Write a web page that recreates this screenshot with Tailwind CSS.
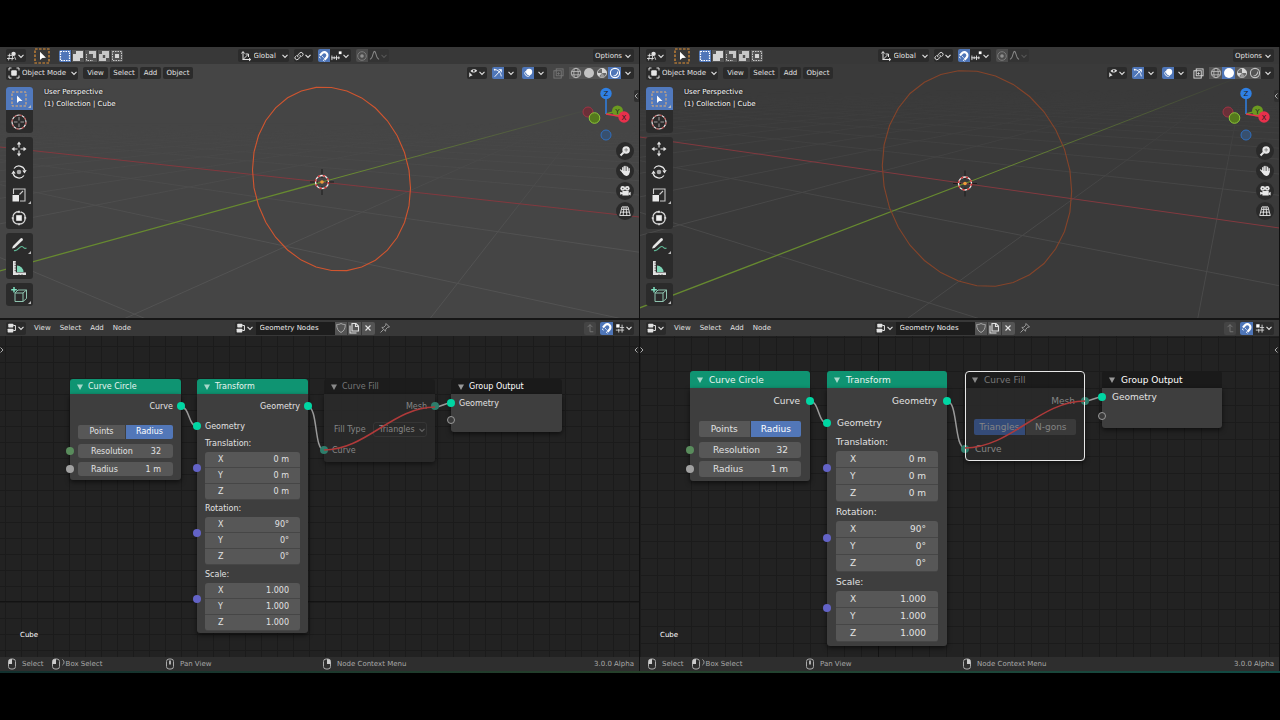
<!DOCTYPE html>
<html lang="en">
<head>
    <meta charset="UTF-8">
    <meta name="viewport" content="width=device-width, initial-scale=1.0">
    <script src="https://cdn.jsdelivr.net/npm/@tailwindcss/browser@4"></script>
    <title>Geometry Nodes - Curve Fill</title>
</head>
<body class="bg-black font-['DejaVu_Sans',sans-serif] text-[7px] leading-3 text-[#e2e2e2]">

    <!-- Icon set -->
    <svg class="hidden">
        <symbol id="i-chev" viewBox="0 0 8 8"><path d="M1.5 2.8 4 5.4 6.5 2.8" fill="none" stroke="currentColor" stroke-width="1.1"/></symbol>
        <symbol id="i-view3d" viewBox="0 0 16 16"><path d="M1 7h8M0 12h11M4.500 4 2.500 15M9 8l-1 7M12 9l2 5" fill="none" stroke="currentColor" stroke-width="1.400"/><circle cx="10.500" cy="4.500" r="3.500" fill="currentColor"/></symbol>
        <symbol id="i-nodes" viewBox="0 0 16 16"><rect x="2" y="1" width="8" height="6" rx="1" fill="currentColor"/><rect x="1" y="9" width="9" height="6" rx="1" fill="currentColor"/><path d="M10 4h3.500v8H10" fill="none" stroke="currentColor" stroke-width="1.600"/></symbol>
        <symbol id="i-selbox" viewBox="0 0 16 16"><rect x="1" y="1" width="14" height="14" fill="none" stroke="#e29136" stroke-width="1.200" stroke-dasharray="2.600 1.400"/><path d="M6 3.800v8.200l2.300-2 3.700-.2z" fill="#fff"/></symbol>
        <symbol id="i-m1" viewBox="0 0 12 12"><rect x="1.500" y="1.500" width="9" height="9" fill="none" stroke="#fff" stroke-width="1.200" stroke-dasharray="1.500 1"/></symbol>
        <symbol id="i-m2" viewBox="0 0 12 12"><path d="M4 1h7v7H8v3H1V4h3z" fill="#d4d4d4"/></symbol>
        <symbol id="i-m3" viewBox="0 0 12 12"><path d="M4 1h7v7H8V4H4z" fill="#c8c8c8"/><path d="M1.500 4v6.500H8" fill="none" stroke="#c8c8c8" stroke-dasharray="1.500 1"/></symbol>
        <symbol id="i-m4" viewBox="0 0 12 12"><path d="M4 1h7v7H8v3H1V4h3zM4.800 5v3H7.200V5z" fill="#c8c8c8" fill-rule="evenodd"/></symbol>
        <symbol id="i-m5" viewBox="0 0 12 12"><rect x="1.500" y="1.500" width="9" height="9" fill="none" stroke="#c8c8c8" stroke-dasharray="1.500 1"/><rect x="4" y="4" width="4" height="4" fill="#d4d4d4"/></symbol>
        <symbol id="i-axes" viewBox="0 0 12 12"><path d="M3 10V2M1.500 3.500 3 1.500l1.500 2M3 9.500h7.500M9 8l1.800 1.500L9 11M3 9.500 8 4.500M5.500 4h3v3" fill="none" stroke="currentColor"/></symbol>
        <symbol id="i-link" viewBox="0 0 12 12"><path d="M5 7.500a2.300 2.300 0 0 1 0-3.200L7 2.400a2.200 2.200 0 0 1 3.200 3.200L9 6.800M7 4.700a2.300 2.300 0 0 1 0 3.200L5 9.800a2.200 2.200 0 0 1-3.200-3.200L3 5.400" fill="none" stroke="currentColor" stroke-width="1.200"/></symbol>
        <symbol id="i-magnet" viewBox="0 0 12 12"><path d="M2 5.500 4 3.200a3.100 3.100 0 0 1 4.600 4.200L6.500 9.800" fill="none" stroke="#fff" stroke-width="2.200"/><path d="M1 6.800 2.600 8.200M5 9.800l1.500 1.400M4.200 6.300 5.500 7.500" stroke="#fff" stroke-width="1"/></symbol>
        <symbol id="i-incr" viewBox="0 0 12 12"><path d="M.5 8.500h9M1 6v5M3.500 7v3M6 6v5M8.500 7v3" fill="none" stroke="currentColor"/><rect x="8.500" y="1.500" width="3" height="3" fill="#fff"/></symbol>
        <symbol id="i-grid" viewBox="0 0 12 12"><path d="M1 8.500h10M6 5.500h5M4.500 7v4.500M8.500 2v9.500" fill="none" stroke="currentColor"/><rect x="1.500" y="1.500" width="4" height="4" fill="#fff"/></symbol>
        <symbol id="i-prop" viewBox="0 0 12 12"><circle cx="6" cy="6" r="4.300" fill="none" stroke="#7c7c7c"/><circle cx="6" cy="6" r="1.800" fill="#909090"/></symbol>
        <symbol id="i-falloff" viewBox="0 0 12 12"><path d="M1 10c3.500 0 3-8.500 5-8.500S7.500 10 11 10" fill="none" stroke="#888" stroke-width="1.100"/></symbol>
        <symbol id="i-mode" viewBox="0 0 12 12"><path d="M1 3.500V1h2.500M8.500 1H11v2.500M11 8.500V11H8.500M3.500 11H1V8.500" fill="none" stroke="currentColor"/><rect x="3.200" y="3.200" width="5.600" height="5.600" rx="1" fill="#e6e6e6"/></symbol>
        <symbol id="i-vis" viewBox="0 0 12 12"><path d="M3 3.500C5 .8 9 .8 11 3.200 9 6 5 6 3 3.500z" fill="#e0e0e0"/><circle cx="7" cy="3.300" r="1.100" fill="#2b2b2b"/><path d="M1.500 5v6l1.700-1.500L5.500 9z" fill="#e0e0e0"/></symbol>
        <symbol id="i-gizmo" viewBox="0 0 12 12"><path d="M2 2c4 0 7 3 8 8M2 10.500 10 2M6.800 2H10v3.200" fill="none" stroke="#fff" stroke-width="1.100"/><circle cx="2" cy="2" r="1" fill="#fff"/></symbol>
        <symbol id="i-overlay" viewBox="0 0 12 12"><circle cx="7.300" cy="4.700" r="3.700" fill="#fff"/><path d="M3.200 3.800a3.600 3.600 0 1 0 5.300 5" fill="none" stroke="#fff" stroke-width="1.100"/></symbol>
        <symbol id="i-xray" viewBox="0 0 12 12"><rect x="1" y="3" width="8" height="8" fill="none" stroke="currentColor"/><rect x="3.500" y="1" width="7.500" height="7.500" fill="none" stroke="currentColor"/><path d="M6 4.500v3M4.500 6h3" stroke="currentColor" stroke-width=".8"/></symbol>
        <symbol id="i-wire" viewBox="0 0 12 12"><circle cx="6" cy="6" r="4.700" fill="none" stroke="#bcbcbc" stroke-width=".9"/><ellipse cx="6" cy="6" rx="2.200" ry="4.700" fill="none" stroke="#bcbcbc" stroke-width=".8"/><path d="M1.600 4.500h8.800M1.600 7.800h8.800" stroke="#bcbcbc" stroke-width=".8"/></symbol>
        <symbol id="i-solid" viewBox="0 0 12 12"><circle cx="6" cy="6" r="5" fill="currentColor"/></symbol>
        <symbol id="i-mat" viewBox="0 0 12 12"><circle cx="6" cy="6" r="4.600" fill="#6a6a6a" stroke="#c4c4c4"/><path d="M6 1.300a4.700 4.700 0 0 1 4.700 4.700H6zM6 6 3 9.500A4.700 4.700 0 0 1 1.300 6z" fill="#d8d8d8"/><path d="M6 6l3 3.600A4.700 4.700 0 0 1 4 10.300z" fill="#9a9a9a"/></symbol>
        <symbol id="i-rend" viewBox="0 0 12 12"><circle cx="6" cy="6" r="4.600" fill="none" stroke="currentColor" stroke-width="1.100"/><path d="M8.500 3.500a3.600 3.600 0 0 1-4.600 5.200c2.500 0 4.600-2 4.600-5.200z" fill="currentColor"/></symbol>
        <symbol id="i-shield" viewBox="0 0 12 12"><path d="M6 1.500c1.500.9 2.800 1 4.300 1 0 4-1.300 6.500-4.300 8-3-1.500-4.300-4-4.300-8 1.500 0 2.800-.1 4.300-1z" fill="none" stroke="#a8a8a8"/></symbol>
        <symbol id="i-copy" viewBox="0 0 12 12"><path d="M4 1.500h4L10.500 4v5H4zM7.500 1.500V4.500h3" fill="none" stroke="#e0e0e0" stroke-width="1.100"/><path d="M2 3.500v7.500h6.500" fill="none" stroke="#e0e0e0" stroke-width="1.100"/></symbol>
        <symbol id="i-x" viewBox="0 0 12 12"><path d="M3 3l6 6M9 3 3 9" stroke="#e6e6e6" stroke-width="1.300"/></symbol>
        <symbol id="i-pin" viewBox="0 0 12 12"><path d="M7 1.500 10.500 5 8.800 5.200 6.800 7.200 6.500 9.200 2.800 5.500 4.800 5.200 6.800 3.200zM4.500 7.500 1.500 10.500" fill="none" stroke="#9a9a9a"/></symbol>
        <symbol id="i-up" viewBox="0 0 12 12"><path d="M10 10.500H6V2M3 5l3-3 3 3" fill="none" stroke="#777" stroke-width="1.100"/></symbol>

        <!-- Toolbar -->
        <symbol id="t-select" viewBox="0 0 16 16"><rect x="1" y="1" width="14" height="14" fill="none" stroke="#e8b070" stroke-width="1" stroke-dasharray="2.500 1.500"/><path d="M6 4.500v7.500l2.200-1.900 3.300-.2z" fill="#fff"/></symbol>
        <symbol id="t-cursor" viewBox="0 0 16 16"><circle cx="8" cy="8" r="7" fill="none" stroke="#e8e8e8" stroke-width="1.200"/><circle cx="8" cy="8" r="7" fill="none" stroke="#a04040" stroke-width="1.200" stroke-dasharray="2.750 2.750"/><path d="M8 3v3.500M8 9.500V13M3 8h3.500M9.500 8H13" stroke="#bbb" stroke-width=".8"/></symbol>
        <symbol id="t-move" viewBox="0 0 16 16"><path d="M8 .5l2.200 3H5.800zM8 15.500l2.200-3H5.800zM.5 8l3-2.200v4.400zM15.500 8l-3-2.200v4.400z" fill="#e6e6e6"/><path d="M8 3v3.500M8 9.500V13M3 8h3.500M9.500 8H13" stroke="#e6e6e6" stroke-width="1.100"/></symbol>
        <symbol id="t-rotate" viewBox="0 0 16 16"><path d="M3 4.500a6.200 6.200 0 0 1 10.800 1.500M13 11.500A6.200 6.200 0 0 1 2.200 10" fill="none" stroke="#e6e6e6" stroke-width="1.200"/><path d="M15.700 6 13.500 9.500 11.300 6.500zM.3 10 2.500 6.500 4.700 9.500z" fill="#e6e6e6"/><circle cx="8" cy="8" r="2.300" fill="#aaa"/></symbol>
        <symbol id="t-scale" viewBox="0 0 16 16"><path d="M2.500 7V2h11.500v12H9" fill="none" stroke="#ccc" stroke-width="1.100"/><rect x="1.500" y="8" width="6.500" height="6.500" fill="#e8e8e8"/><path d="M8.500 7.500l3.500-3.500" stroke="#ccc" stroke-width="1.100"/></symbol>
        <symbol id="t-transform" viewBox="0 0 16 16"><circle cx="8" cy="8" r="6.300" fill="none" stroke="#d8d8d8" stroke-width="1.200" stroke-dasharray="8 1.900" stroke-dashoffset="-1"/><rect x="5.200" y="5.200" width="5.600" height="5.600" fill="#f0f0f0"/><path d="M8 .3l1.800 2.400H6.200zM8 15.700l1.800-2.400H6.200zM.3 8l2.400-1.800v3.600zM15.700 8l-2.400-1.800v3.600z" fill="#e6e6e6"/></symbol>
        <symbol id="t-annotate" viewBox="0 0 16 16"><path d="M1 11.500 2 9 9.500 1.500a1.200 1.200 0 0 1 2 2L3.500 11z" fill="#e6e6e6"/><path d="M3 13.500c4 1.500 5-4.500 8-4 2 .3 2 3 4.500 1.500" fill="none" stroke="#5fb896" stroke-width="1.200"/></symbol>
        <symbol id="t-measure" viewBox="0 0 16 16"><path d="M2 1h2.800v11.500H15V15H2z" fill="#e0e0e0"/><path d="M6 12V5.500A6.500 6.500 0 0 1 12.500 12z" fill="#7fd6b8"/><path d="M3.500 3H5M3.500 5.500H5M3.500 8H5M3.500 10.500H5M8 14v1M11 14v1" stroke="#444" stroke-width=".7"/></symbol>
        <symbol id="t-cube" viewBox="0 0 16 16"><path d="M4 6h8v8.500H4zM4 6l3-3h8.500L12 6M15.500 3v8.500L12 14.500" fill="none" stroke="#8fc4b0" stroke-width="1"/><path d="M3 0v5.500M.2 2.800h5.600" stroke="#7fe0c0" stroke-width="1.500"/></symbol>

        <!-- Navigation -->
        <symbol id="n-zoom" viewBox="0 0 16 16"><circle cx="9.500" cy="6.500" r="5" fill="#e8e8e8"/><path d="M6 10l-4 4" stroke="#e8e8e8" stroke-width="2.500"/><path d="M9.500 4v5M7 6.500h5" stroke="#777" stroke-width="1"/></symbol>
        <symbol id="n-hand" viewBox="0 0 16 16"><path d="M2 6.500 5 9.500V3.500M7 8V2M9.200 8V1.800M11.500 8.500V3M13.600 9V5" fill="none" stroke="#e8e8e8" stroke-width="1.700" stroke-linecap="round"/><path d="M4 8h10.400c0 3.500-1.400 6.500-4.400 6.500S5.500 12 3.500 9z" fill="#e8e8e8"/></symbol>
        <symbol id="n-cam" viewBox="0 0 16 16"><circle cx="5" cy="4.500" r="3.200" fill="#e8e8e8"/><circle cx="11" cy="4.500" r="3.200" fill="#e8e8e8"/><path d="M4.500 8H13v6H4.500v-2L1.500 13V9L4.500 10z" fill="#e8e8e8"/><circle cx="5" cy="4.500" r="1" fill="#555"/><circle cx="11" cy="4.500" r="1" fill="#555"/><path d="M13 10.500l2.500-1.500v5L13 12.500z" fill="#e8e8e8"/></symbol>
        <symbol id="n-persp" viewBox="0 0 16 16"><path d="M4 2.500h8L15 14H1zM2.300 9.500h11.400M3.300 5.800h9.400M6.700 2.500 5.500 14M9.300 2.500 10.500 14" fill="none" stroke="#e8e8e8" stroke-width="1.200"/></symbol>

        <!-- Mouse hints -->
        <symbol id="m-left" viewBox="0 0 12 12"><rect x="2.500" y="1" width="7" height="10" rx="2.500" fill="none" stroke="#aaa"/><path d="M2.500 6V3.500C2.500 2 3.500 1 6 1v5z" fill="#ccc"/></symbol>
        <symbol id="m-mid" viewBox="0 0 12 12"><rect x="2.500" y="1" width="7" height="10" rx="2.500" fill="none" stroke="#aaa"/><path d="M6 2.500v4" stroke="#ddd" stroke-width="1.500"/></symbol>
        <symbol id="m-right" viewBox="0 0 12 12"><rect x="2.500" y="1" width="7" height="10" rx="2.500" fill="none" stroke="#aaa"/><path d="M9.500 6V3.500C9.500 2 8.500 1 6 1v5z" fill="#ccc"/></symbol>
        <symbol id="m-drag" viewBox="0 0 4 12"><path d="M.5 1.500c2 1.500 2 4 0 5.500" fill="none" stroke="#aaa"/></symbol>
    </svg>

    <div class="flex min-h-screen flex-col pt-[47px] pb-[47px]">
        <main id="windows" class="grid flex-1 grid-cols-2"></main>
        <div class="h-[2px] bg-linear-to-r from-[#12302e] via-[#26402a] to-[#0f4a44]"></div>
    </div>

    <script>
        const icon = (id, cls = 'size-3') => `<svg class="${cls} shrink-0"><use href="#${id}"/></svg>`;
        const chev = icon('i-chev', 'size-2');

        // Class sets for the two zoom levels of the node editor
        const zoom = {
            small: {
                text: 'text-[8px]', node: 'w-[111px]', head: 'h-[15px] gap-[5px] pl-[7px]', row: 'h-4 pt-px', px: 'px-2',
                seg: 'h-[14px]', num: 'h-[14px] pl-[13px] pr-3 pt-px', vec: 'h-4 pl-[13px] pr-[11px] pt-px',
                label: 'h-[17px] pt-px', io: 'px-2', nums: 'gap-1', side: '-left-3', numTop: 'top-[3px]', vecTop: 'top-[12px]',
                grid: 'bg-size-[16px_16px] bg-position-[5px_10px]'
            },
            large: {
                text: 'text-[9px]', node: 'w-[120px]', head: 'h-[17px] gap-1.5 pl-[7px]', row: 'h-[18px]', px: 'px-[9px]',
                seg: 'h-4', num: 'h-4 pl-[14px] pr-[13px]', vec: 'h-[17px] pl-[14px] pr-3',
                label: 'h-[19px]', io: 'px-[10px]', nums: 'gap-[3px]', side: '-left-[13px]', numTop: 'top-1', vecTop: 'top-[13px]',
                grid: 'bg-size-[17px_17px] bg-position-[0px_1px]'
            }
        };

        const socket = (side, color) => `<i class="absolute ${side} top-1/2 size-2 -translate-y-1/2 rounded-full ${color}"></i>`;
        const L = '-left-1', R = '-right-1', GEO = 'bg-[#00d6a3]', VEC = 'bg-[#6363c7]';

        function node(z, place, head, title, titleCls, body) {
            return `<section class="absolute ${place} ${z.node} ${z.text}">
                <h2 class="flex items-center rounded-t-[3px] ${z.head} ${head}">
                    <svg class="size-1.5" viewBox="0 0 6 6"><path d="M0 .5h6L3 6z" fill="currentColor" opacity=".7"/></svg>
                    <span class="${titleCls}">${title}</span>
                </h2>${body}</section>`;
        }
        const out = (z, name, s = GEO) => `<div class="relative mt-1 flex items-center justify-end ${z.row} ${z.io}">${name}${socket(R, s)}</div>`;
        const inp = (z, name, gap, s = GEO) => `<div class="relative flex items-center ${gap} ${z.row} ${z.io}">${name}${socket(L, s)}</div>`;

        function segmented(z, id, names, active, on, off) {
            return `<div class="flex gap-px overflow-hidden rounded-[2px] ${z.seg}">` + names.map((n, i) => `
                <label class="relative flex flex-1 items-center justify-center ${i === active ? on : off}">
                    <input type="radio" name="${id}" class="sr-only" ${i === active ? 'checked' : ''}>${n}</label>`).join('') + '</div>';
        }

        function number(cls, name, value) {
            return `<label class="flex items-center bg-[#575757] ${cls}"><span>${name}</span>
                <input type="text" value="${value}" class="w-0 min-w-0 flex-1 bg-transparent p-0 text-right outline-none"></label>`;
        }

        function vector(z, name, values, gap) {
            return `<div class="flex items-center ${z.label} ${gap}">${name}:</div>
                <div class="relative divide-y divide-[#464646]">` +
                values.map((v, i) => number(z.vec + (i === 0 ? ' rounded-t-[3px]' : i === 2 ? ' rounded-b-[3px]' : ''), 'XYZ'[i], v)).join('') +
                `<i class="absolute ${z.side} ${z.vecTop} size-2 rounded-full border-0 ${VEC}"></i></div>`;
        }

        function nodes(w) {
            const z = zoom[w.zoom];
            const body = 'rounded-b-[3px] bg-[#3e3e3e] shadow-[0_2px_5px_rgba(0,0,0,0.6)]';
            const green = 'bg-[#0f9472] text-[#e8f5f0]';
            const mute = 'bg-[#2e7d6b]';
            return node(z, w.at.circle, green, 'Curve Circle', '', `
                <div class="flow-root ${body} ${w.pbCircle}">
                    ${out(z, 'Curve')}
                    <div class="mt-[11px] flex flex-col gap-[5px] ${z.px}">
                        ${segmented(z, w.id + '-mode', ['Points', 'Radius'], 1, 'bg-[#5277b8] text-white', 'bg-[#575757]')}
                        <div class="flex flex-col ${z.nums}">
                            <div class="relative">${number(z.num + ' rounded-[3px]', 'Resolution', '32')}<i class="absolute ${z.side} ${z.numTop} size-2 rounded-full bg-[#598c5c]"></i></div>
                            <div class="relative">${number(z.num + ' rounded-[3px]', 'Radius', '1 m')}<i class="absolute ${z.side} ${z.numTop} size-2 rounded-full bg-[#a1a1a1]"></i></div>
                        </div>
                    </div>
                </div>`)
            + node(z, w.at.transform, green, 'Transform', '', `
                <div class="flow-root ${body} ${w.pbTransform}">
                    ${out(z, 'Geometry')}
                    ${inp(z, 'Geometry', 'mt-1')}
                    <div class="${z.px}">
                        ${vector(z, 'Translation', ['0 m', '0 m', '0 m'], w.vecGap)}
                        ${vector(z, 'Rotation', ['90°', '0°', '0°'], '')}
                        ${vector(z, 'Scale', ['1.000', '1.000', '1.000'], w.vecGap)}
                    </div>
                </div>`)
            + node(z, w.at.fill, 'bg-[#1c1c1c]/80 text-[#b8b8b8]', 'Curve Fill', 'text-[#777]', `
                <div class="flow-root rounded-b-[3px] bg-[#2a2a2a]/85 text-[#858585] shadow-[0_2px_5px_rgba(0,0,0,0.5)] ${w.pbFill}">
                    ${out(z, 'Mesh', mute)}
                    ${w.fill(z)}
                    ${inp(z, 'Curve', 'mt-[5px]', mute)}
                </div>${w.selected ? '<div class="absolute inset-0 rounded-[4px] border border-[#e8e8e8]"></div>' : ''}`)
            + node(z, w.at.output, 'bg-[#1a1a1a] text-[#cfcfcf]', 'Group Output', 'text-white', `
                <div class="flow-root ${body} ${w.outH}">
                    ${inp(z, 'Geometry', w.outTop)}
                    ${inp(z, '', 'mt-px', 'bg-[#3a3a3a] border border-[#9a9a9a]')}
                </div>`);
        }

        // Perspective floor grid: every line runs to one of two vanishing points
        function scene(s) {
            const pt = (vp, k) => [(s.o[0] + k * vp[0]) / (1 + k), (s.o[1] + k * vp[1]) / (1 + k)];
            const ray = (vp, p) => `M${vp[0]} ${vp[1]}L${(p[0] + (p[0] - vp[0]) * 6).toFixed(1)} ${(p[1] + (p[1] - vp[1]) * 6).toFixed(1)}`;
            let d = '';
            for (let i = -5; i <= 14; i++) if (i) d += ray(s.vpY, pt(s.vpX, i * s.a));
            for (let j = -4; j <= 14; j++) if (j) d += ray(s.vpX, pt(s.vpY, j * s.b));
            const [cx, cy, rw, rh, phi] = s.ring;
            const ring = Array.from({ length: 32 }, (_, i) => {
                const t = i * Math.PI / 16;
                return `${(cx + rw * Math.cos(t)).toFixed(1)},${(cy + rh * Math.sin(t + phi)).toFixed(1)}`;
            }).join(' ');
            const [ox, oy] = s.o;
            return `<svg class="absolute inset-0 h-full w-full" viewBox="0 47 640 271" preserveAspectRatio="xMidYMid slice">
                <defs>
                    <linearGradient id="${s.id}-g" gradientUnits="userSpaceOnUse" x1="0" y1="${s.vpX[1] + 15}" x2="0" y2="${s.vpX[1] + 140}"><stop stop-color="#fff" stop-opacity="0"/><stop offset="1" stop-color="#fff"/></linearGradient>
                    <mask id="${s.id}-m" maskUnits="userSpaceOnUse" x="0" y="47" width="640" height="271"><rect y="47" width="640" height="271" fill="url(#${s.id}-g)"/></mask>
                    <linearGradient id="${s.id}-y" gradientUnits="userSpaceOnUse" x1="${ox}" y1="0" x2="${s.vpY[0]}" y2="0"><stop stop-color="#6d9130"/><stop offset="1" stop-color="#6d9130" stop-opacity="0"/></linearGradient>
                </defs>
                <path d="${d}" stroke="${s.line}" fill="none" mask="url(#${s.id}-m)"/>
                <path d="${s.red}" stroke="#83393f" fill="none"/>
                <path d="${s.green}" stroke="#678a30" stroke-width="1.3" fill="none"/>
                <path d="M${ox} ${oy}L${s.vpY[0]} ${s.vpY[1]}" stroke="url(#${s.id}-y)" fill="none"/>
                <polygon points="${ring}" fill="none" stroke="${s.ringColor}" stroke-width="1.1"/>
                <path d="M${ox} ${oy - 13}v9M${ox} ${oy + 4}v9M${ox - 12} ${oy}h8M${ox + 4} ${oy}h8" stroke="#1c1c1c"/>
                <circle cx="${ox}" cy="${oy}" r="6.500" fill="none" stroke="#f0f0f0" stroke-width="1.300"/>
                <circle cx="${ox}" cy="${oy}" r="6.500" fill="none" stroke="#d03030" stroke-width="1.300" stroke-dasharray="2.550 2.550"/>
                <circle cx="${ox}" cy="${oy}" r="1.800" fill="#f09a3c"/>
            </svg>`;
        }

        const gizmo = `<svg class="h-[60px] w-[50px]" viewBox="581 84 50 60">
            <g font-family="DejaVu Sans" font-size="7" text-anchor="middle" fill="#222">
            <circle cx="588" cy="112" r="5" fill="#6b3038" stroke="#a03444"/>
            <path d="M606 114L617 111" stroke="#6b9a20" stroke-width="1.500"/><circle cx="617.500" cy="111" r="5.500" fill="#6b9a20"/><text x="617.500" y="114">Y</text>
            <path d="M606 114V98" stroke="#2f80e4" stroke-width="1.500"/><circle cx="606" cy="93.500" r="5.700" fill="#2f80e4"/><text x="606" y="96">Z</text>
            <path d="M606 114L624 117" stroke="#e8304c" stroke-width="1.500"/><circle cx="624" cy="117" r="5.700" fill="#e8304c"/><text x="624" y="120">X</text>
            <circle cx="594.500" cy="118" r="5.300" fill="#557a1c" stroke="#8cc63a"/>
            <circle cx="606" cy="135" r="5" fill="#38506e" stroke="#2f6fc0"/></g></svg>`;

        const tools = [
            [['t-select', 'Select Box', 1], ['t-cursor', 'Cursor', 0]],
            [['t-move', 'Move', 0], ['t-rotate', 'Rotate', 0], ['t-scale', 'Scale', 1], ['t-transform', 'Transform', 0]],
            [['t-annotate', 'Annotate', 1], ['t-measure', 'Measure', 0]],
            [['t-cube', 'Add Cube', 1]]
        ];

        const dark = 'bg-[#2b2b2b]', blue = 'bg-[#4f76b8]', grey = 'bg-[#545454]';
        const btn = (label, cls, html) => `<button type="button" aria-label="${label}" class="flex items-center justify-center whitespace-nowrap ${cls}">${html}</button>`;
        const drop = (label, value, w, pad) => `<select aria-label="${label}" class="h-[13px] ${w} ${pad} appearance-none bg-transparent outline-none"><option>${value}</option></select>`;

        function viewport(w) {
            const shade = ['i-wire', 'i-solid', 'i-mat', 'i-rend'];
            return `<div class="relative flex h-[271px] flex-col overflow-hidden ${w.bg}">
                ${scene(w.scene)}
                <header class="relative flex h-[17px] items-center bg-[#383838] pr-[5px] pl-[6px]">
                    ${btn('Editor type', 'h-[13px] w-5 rounded-[2px] ' + dark, icon('i-view3d', 'size-2.5') + chev)}
                    ${btn('Active tool', 'ml-2 size-4', icon('i-selbox', 'size-4'))}
                    <div class="ml-[9px] flex gap-px overflow-hidden rounded-[2px]">
                        ${[1, 2, 3, 4, 5].map(n => btn('Selection mode ' + n, 'size-3 ' + (n === 1 ? blue : grey), icon('i-m' + n))).join('')}
                    </div>
                    <div class="absolute left-1/2 flex -translate-x-[82px] items-center">
                        <label class="relative flex w-[51px] items-center rounded-[2px] pl-0.5 ${dark}">${icon('i-axes')}${drop('Orientation', 'Global', 'w-full', 'pl-0.5')}<span class="absolute right-0">${chev}</span></label>
                        ${btn('Pivot point', 'ml-[5px] h-[13px] w-[19px] rounded-[2px] ' + dark, icon('i-link', 'size-2.5') + chev)}
                        ${btn('Snap', 'ml-[5px] h-[13px] w-3 rounded-l-[2px] ' + blue, icon('i-magnet'))}
                        ${btn('Snap to', 'h-[13px] w-[21px] rounded-r-[2px] ' + dark, icon('i-incr', 'size-[11px]') + chev)}
                        ${btn('Proportional editing', 'ml-[5px] h-[13px] w-3 rounded-l-[2px] bg-[#4c4c4c]', icon('i-prop'))}
                        ${btn('Falloff', 'h-[13px] w-[21px] rounded-r-[2px] bg-[#333] text-[#555]', icon('i-falloff', 'size-[11px]') + chev)}
                    </div>
                    ${btn('Options', 'ml-auto h-[13px] w-[41px] gap-0.5 rounded-[2px] ' + dark, 'Options' + chev)}
                </header>
                <div class="relative flex h-[18px] items-center pr-[5px] pl-[6px]">
                    <label class="relative mr-[5px] flex w-[72px] items-center rounded-[2px] pl-[2px] ${dark}">${icon('i-mode')}${drop('Mode', 'Object Mode', 'w-full', 'pl-0.5')}<span class="absolute right-0">${chev}</span></label>
                    <nav class="flex gap-0.5">
                        ${btn('View', 'h-3 w-[25px] rounded-[2px] ' + dark, 'View')}
                        ${btn('Select', 'h-3 w-7 rounded-[2px] ' + dark, 'Select')}
                        ${btn('Add', 'h-3 w-[21px] rounded-[2px] ' + dark, 'Add')}
                        ${btn('Object', 'h-3 w-[30px] rounded-[2px] ' + dark, 'Object')}
                    </nav>
                    <div class="ml-auto flex gap-[5px]">
                        ${btn('Object types', 'h-3 w-5 rounded-[2px] ' + dark, icon('i-vis', 'size-2.5') + chev)}
                        <div class="flex">${btn('Gizmos', 'h-3 w-3 rounded-l-[2px] ' + blue, icon('i-gizmo', 'size-2.5'))}${btn('Gizmo options', 'h-3 w-[13px] rounded-r-[2px] ' + dark, chev)}</div>
                        <div class="flex">${btn('Overlays', 'h-3 w-3 rounded-l-[2px] ' + blue, icon('i-overlay', 'size-2.5'))}${btn('Overlay options', 'h-3 w-[13px] rounded-r-[2px] ' + dark, chev)}</div>
                        ${btn('X-ray', 'h-3 w-3 ' + w.xray, icon('i-xray', 'size-[11px]'))}
                        <div class="flex">
                            ${shade.map((s, i) => btn('Shading ' + (i + 1), 'h-3 w-[13px] ' + (i === w.shading ? blue + ' text-white' : grey + ' text-[#c4c4c4]'), icon(s, 'size-3'))).join('')}
                            ${btn('Shading options', 'h-3 w-[13px] rounded-r-[2px] ' + dark, chev)}
                        </div>
                    </div>
                </div>
                <div class="relative flex flex-1 items-start justify-between pt-[5px] pl-[6px]">
                    <div class="flex gap-[11px]">
                        <div class="flex w-[27px] flex-col gap-1">
                            ${tools.map(g => `<div class="overflow-hidden rounded-[3px] ${dark}">` + g.map(t => btn(t[1], 'relative h-[23px] w-full pr-0.5 ' + (t[0] === 't-select' ? 'bg-[#5179bd]' : ''),
                                icon(t[0], 'size-4') + (t[2] ? '<svg class="absolute right-0.5 bottom-0.5 size-[3px]" viewBox="0 0 3 3"><path d="M3 0v3H0z" fill="#bbb"/></svg>' : ''))).join('') + '</div>').join('')}
                        </div>
                        <p class="-mt-px text-white [text-shadow:0_0_2px_#000]">User Perspective<br>(1) Collection | Cube</p>
                    </div>
                    <div class="flex w-[60px] flex-col items-center">
                        <div class="-mt-[3px] mr-[6px]">${gizmo}</div>
                        <div class="-mt-0.5 ml-[31px] flex flex-col gap-0.5">
                            ${['zoom', 'hand', 'cam', 'persp'].map(n => btn(n, 'size-[18px] rounded-full bg-[#2a2a2a]', icon('n-' + n, 'size-3'))).join('')}
                        </div>
                    </div>
                    <button type="button" aria-label="Show sidebar" class="absolute top-2 right-0 h-3 w-[5px] rounded-l-[2px] bg-[#303030]"><svg class="h-2 w-1" viewBox="0 0 4 8"><path d="M3.500 1.500 1 4l2.500 2.500" fill="none" stroke="#aaa"/></svg></button>
                </div>
            </div>`;
        }

        function nodeEditor(w) {
            const link = (d, c = '#9a9a9a') => `<path d="${d}" fill="none" stroke="${c}" stroke-width="1.500"/>`;
            return `<div class="mt-[2px] flex flex-1 flex-col">
                <header class="relative flex h-4 items-center bg-[#383838] pr-[5px] pl-[6px]">
                    ${btn('Editor type', 'h-[13px] w-5 rounded-[2px] ' + dark, icon('i-nodes', 'size-2.5') + chev)}
                    <nav class="ml-2 flex gap-[9px]">
                        ${['View', 'Select', 'Add', 'Node'].map(n => `<button type="button">${n}</button>`).join('')}
                    </nav>
                    <div class="absolute left-1/2 flex -translate-x-[85px] items-center">
                        ${btn('Browse node trees', 'h-[13px] w-[21px] rounded-l-[2px] ' + dark, icon('i-nodes', 'size-2.5') + chev)}
                        <input type="text" aria-label="Node tree name" value="Geometry Nodes" class="h-[13px] w-[79px] bg-[#1d1d1d] pl-1 text-[#ececec] outline-none">
                        <div class="flex gap-px overflow-hidden rounded-r-[2px]">
                            ${btn('Fake user', 'h-[13px] w-3 ' + grey, icon('i-shield'))}
                            ${btn('Duplicate', 'h-[13px] w-[13px] ' + grey, icon('i-copy'))}
                            ${btn('Unlink', 'h-[13px] w-[13px] ' + grey, icon('i-x', 'size-2.5'))}
                        </div>
                        ${btn('Pin', 'ml-1 size-3', icon('i-pin'))}
                    </div>
                    ${btn('Parent tree', 'ml-auto h-[13px] w-3 rounded-[2px] bg-[#444]', icon('i-up', 'size-2.5'))}
                    ${btn('Snap', 'ml-1 h-[13px] w-[13px] rounded-l-[2px] ' + blue, icon('i-magnet'))}
                    ${btn('Snap element', 'h-[13px] w-[21px] rounded-r-[2px] ' + dark, icon('i-grid', 'size-2.5') + chev)}
                </header>
                <div class="relative flex-1 overflow-hidden bg-[#222] bg-[linear-gradient(#1b1b1b_1px,transparent_1px),linear-gradient(90deg,#1b1b1b_1px,transparent_1px)] ${zoom[w.zoom].grid}">
                    <div class="absolute bg-[#131313] ${w.axis}"></div>
                    <svg class="absolute inset-0 h-full w-full">${w.links.map(d => link(d)).join('')}</svg>
                    ${nodes(w)}
                    <svg class="pointer-events-none absolute inset-0 h-full w-full">${link(w.muted, '#b03a3a')}</svg>
                    <button type="button" aria-label="Show toolbar" class="absolute top-2 left-0 h-3 w-[5px]"><svg class="h-2 w-1" viewBox="0 0 4 8"><path d="M.5 1.500 3 4 .5 6.500" fill="none" stroke="#aaa"/></svg></button>
                    <button type="button" aria-label="Show sidebar" class="absolute top-2 right-0 h-3 w-[5px]"><svg class="h-2 w-1" viewBox="0 0 4 8"><path d="M3.500 1.500 1 4l2.500 2.500" fill="none" stroke="#aaa"/></svg></button>
                    <p class="absolute bottom-4 left-5 text-white">Cube</p>
                </div>
                <footer class="flex h-[14px] items-center bg-[#2e2e2e] pr-[5px] pl-[6px] text-[#a8a8a8]">
                    <div class="flex w-[158px] items-center">
                        ${icon('m-left')}<span class="ml-1">Select</span>
                        <span class="ml-1.5 flex">${icon('m-left')}${icon('m-drag', 'h-3 w-1')}</span><span>Box Select</span>
                    </div>
                    <div class="flex w-[157px] items-center gap-1">${icon('m-mid')}Pan View</div>
                    <div class="flex items-center gap-1">${icon('m-right')}Node Context Menu</div>
                    <span class="ml-auto">3.0.0 Alpha</span>
                </footer>
            </div>`;
        }

        const windows = [
            {
                id: 'a', zoom: 'small', bg: 'bg-[#454545]', shading: 3, xray: 'text-[#777]', selected: false,
                at: { circle: 'left-[70px] top-[43px]', transform: 'left-[197px] top-[43px]', fill: 'left-[324px] top-[43px]', output: 'left-[451px] top-[43px]' },
                pbCircle: 'pb-1', pbTransform: 'pb-0.5', pbFill: 'pb-1', outH: 'h-[38px]', outTop: 'mt-px', vecGap: 'mt-px',
                axis: 'inset-x-0 top-[265px] h-px',
                fill: z => `<div class="mt-2 flex h-[15px] items-center justify-between pr-2 pl-2.5">
                    <label for="fill-type">Fill Type</label>
                    <div class="relative flex items-center rounded-[3px] border border-[#353535]"><select id="fill-type" class="h-[13px] w-[52px] appearance-none bg-transparent pl-[5px] outline-none"><option>Triangles</option></select><span class="absolute right-0 text-[#666]">${chev}</span></div></div>`,
                links: ['M181 71C190 71 188 90 197 90', 'M308 71C318 71 314 114 324 114', 'M435 71C442 71 444 67 451 67'],
                muted: 'M324 114C366 114 393 71 435 71',
                scene: { id: 'sa', o: [322.5, 182], vpX: [-355, 108], vpY: [595, 108], a: .113, b: .176, line: '#535353', red: 'M0 147L322 182L640 217', green: 'M0 271L322 182', ring: [332, 179, 79, 92, .1], ringColor: '#d0552f' }
            },
            {
                id: 'b', zoom: 'large', bg: 'bg-[#3a3a3a]', shading: 1, xray: 'text-[#ddd]', selected: true,
                at: { circle: 'left-[50px] top-[35px]', transform: 'left-[187px] top-[35px]', fill: 'left-[325px] top-[35px]', output: 'left-[462px] top-[35px]' },
                pbCircle: 'pb-1', pbTransform: 'pb-1', pbFill: 'pb-[3px]', outH: 'h-[40px]', outTop: '', vecGap: '',
                axis: 'inset-y-0 left-[238px] w-px',
                fill: z => `<div class="mt-[9px] ${z.px}">${segmented(z, 'fill-mode', ['Triangles', 'N-gons'], 0, 'bg-[#344b78]', 'bg-[#3a3a3a]')}</div>`,
                links: ['M170 65C179 65 178 87 187 87', 'M307 65C318 65 314 112 325 112', 'M445 65C452 65 455 61 462 61'],
                muted: 'M325 112C370 112 400 65 445 65',
                scene: { id: 'sb', o: [325.5, 183.5], vpX: [-438, 75], vpY: [605, 75], a: .124, b: .2, line: '#4a4a4a', red: 'M0 137L325 183.500L640 228', green: 'M0 308L325 183.500', ring: [337.5, 178.5, 94.7, 108, .12], ringColor: '#85442a' }
            }
        ];

        document.getElementById('windows').innerHTML = windows.map(w =>
            `<div class="flex flex-col border-r border-[#101010] bg-[#161616]">${viewport(w)}${nodeEditor(w)}</div>`).join('');
    </script>
</body>
</html>
